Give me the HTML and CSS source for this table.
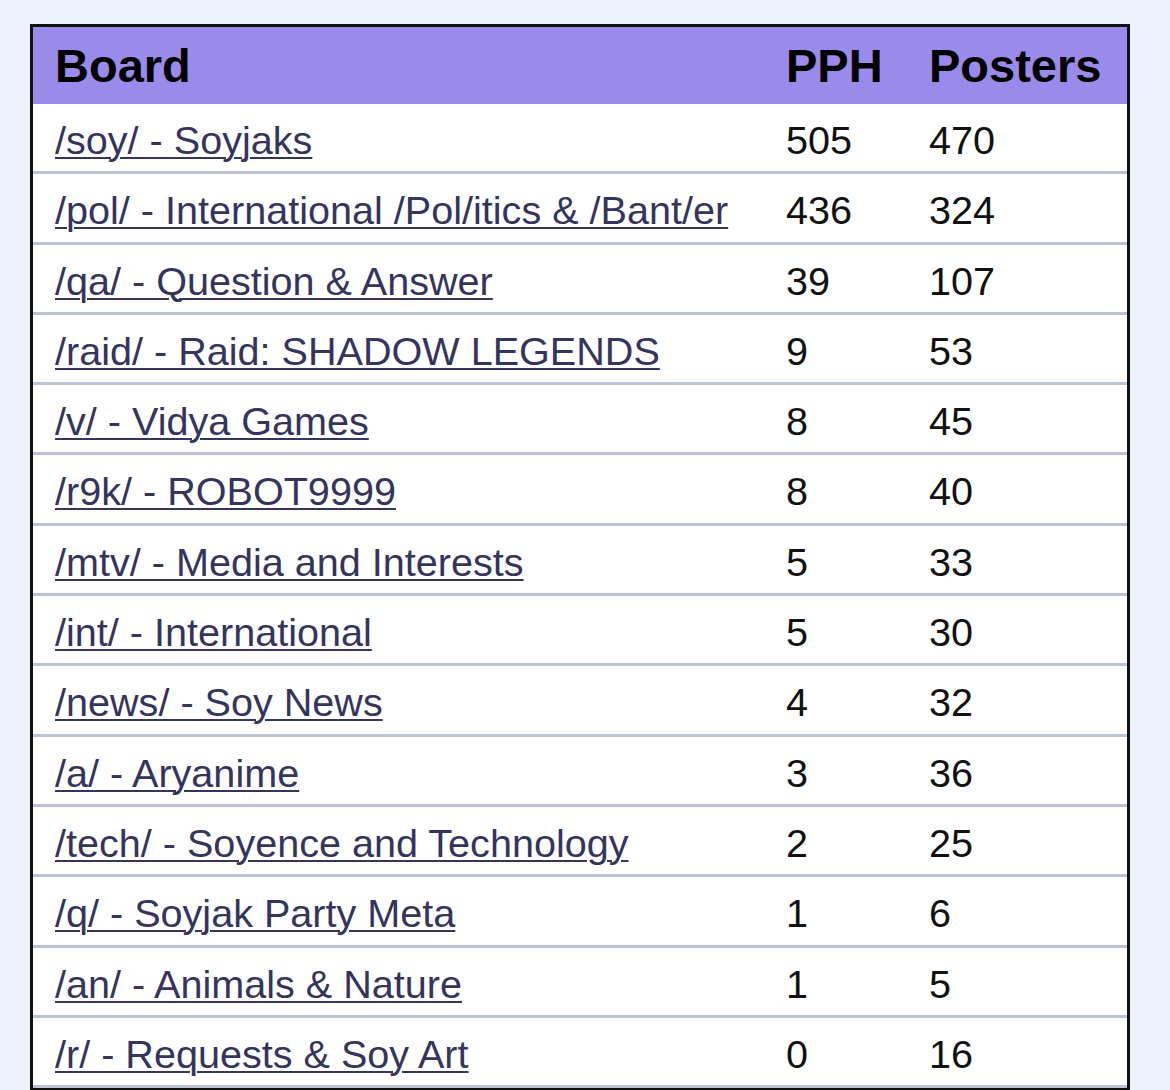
FILE: index.html
```html
<!DOCTYPE html>
<html>
<head>
<meta charset="utf-8">
<link rel="stylesheet" href="styles.css">
</head>
<body>
<table class="boards">
  <colgroup>
    <col class="c-board">
    <col class="c-pph">
    <col class="c-posters">
  </colgroup>
  <thead>
    <tr><th>Board</th><th>PPH</th><th>Posters</th></tr>
  </thead>
  <tbody>
    <tr><td><a href="#">/soy/ - Soyjaks</a></td><td>505</td><td>470</td></tr>
    <tr><td><a href="#">/pol/ - International /Pol/itics &amp; /Bant/er</a></td><td>436</td><td>324</td></tr>
    <tr><td><a href="#">/qa/ - Question &amp; Answer</a></td><td>39</td><td>107</td></tr>
    <tr><td><a href="#">/raid/ - Raid: SHADOW LEGENDS</a></td><td>9</td><td>53</td></tr>
    <tr><td><a href="#">/v/ - Vidya Games</a></td><td>8</td><td>45</td></tr>
    <tr><td><a href="#">/r9k/ - ROBOT9999</a></td><td>8</td><td>40</td></tr>
    <tr><td><a href="#">/mtv/ - Media and Interests</a></td><td>5</td><td>33</td></tr>
    <tr><td><a href="#">/int/ - International</a></td><td>5</td><td>30</td></tr>
    <tr><td><a href="#">/news/ - Soy News</a></td><td>4</td><td>32</td></tr>
    <tr><td><a href="#">/a/ - Aryanime</a></td><td>3</td><td>36</td></tr>
    <tr><td><a href="#">/tech/ - Soyence and Technology</a></td><td>2</td><td>25</td></tr>
    <tr><td><a href="#">/q/ - Soyjak Party Meta</a></td><td>1</td><td>6</td></tr>
    <tr><td><a href="#">/an/ - Animals &amp; Nature</a></td><td>1</td><td>5</td></tr>
    <tr><td><a href="#">/r/ - Requests &amp; Soy Art</a></td><td>0</td><td>16</td></tr>
  </tbody>
</table>
</body>
</html>
```
FILE: styles.css
```css
html, body {
  margin: 0;
  padding: 0;
  background: #eef2fd;
}
body {
  padding: 24px 0 0 30px;
  font-family: "Liberation Sans", Arial, sans-serif;
  color: #111;
}
.boards {
  border-collapse: separate;
  border-spacing: 0;
  border: 3px solid #111;
  background: #fff;
  width: 1100px;
  table-layout: fixed;
}
.c-board { width: 731px; }
.c-pph { width: 143px; }
.c-posters { width: 220px; }
.boards th {
  background: #9a8bea;
  color: #000;
  font-weight: bold;
  font-size: 47px;
  line-height: 77px;
  height: 77px;
  padding: 0 0 0 22px;
  text-align: left;
  box-sizing: border-box;
}
.boards td {
  font-size: 39.6px;
  line-height: 61.3px;
  padding: 6px 0 0 22px;
  border-bottom: 3px solid #b9c5d6;
  white-space: nowrap;
  color: #111;
}
.boards td a {
  color: #34345c;
  text-decoration: underline;
  text-decoration-thickness: 2px;
  text-underline-offset: 3px;
}
```
